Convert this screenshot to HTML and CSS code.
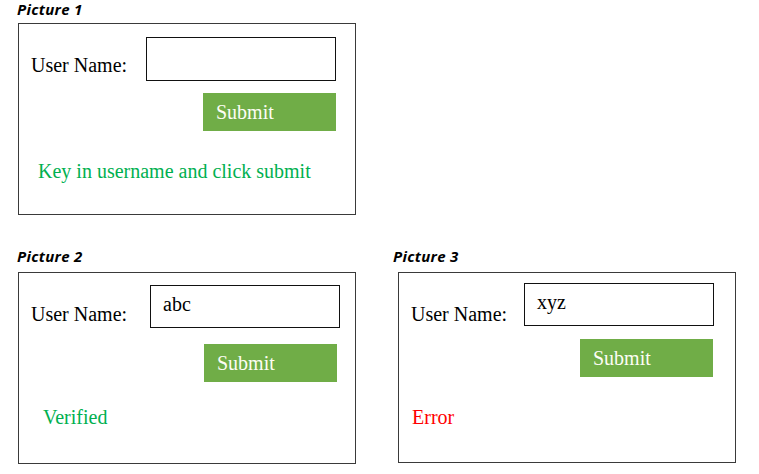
FILE: index.html
```html
<!DOCTYPE html>
<html>
<head>
<meta charset="utf-8">
<link rel="stylesheet" href="styles.css">
</head>
<body>
<div class="page">
  <section class="figure figure--first">
    <div class="fig-title">Picture 1</div>
    <div class="card card--one">
      <div class="field-row">
        <span class="label">User Name:</span>
        <div class="input"></div>
      </div>
      <div class="button">Submit</div>
      <div class="message message--info">Key in username and click submit</div>
    </div>
  </section>
  <div class="figure-row">
    <section class="figure">
      <div class="fig-title">Picture 2</div>
      <div class="card card--two">
        <div class="field-row">
          <span class="label">User Name:</span>
          <div class="input">abc</div>
        </div>
        <div class="button">Submit</div>
        <div class="message message--ok">Verified</div>
      </div>
    </section>
    <section class="figure figure--right">
      <div class="fig-title">Picture 3</div>
      <div class="card card--three">
        <div class="field-row">
          <span class="label">User Name:</span>
          <div class="input">xyz</div>
        </div>
        <div class="button">Submit</div>
        <div class="message message--error">Error</div>
      </div>
    </section>
  </div>
</div>
</body>
</html>
```
FILE: styles.css
```css
html, body {
  margin: 0;
  padding: 0;
  background: #ffffff;
}

.page {
  padding-left: 17px;
  width: 759px;
  box-sizing: border-box;
}

.figure-row {
  display: flex;
  gap: 37px;
  margin-top: 32px;
}

.fig-title {
  font-family: "Open Sans", "Liberation Sans", Arial, sans-serif;
  font-weight: 700;
  font-style: italic;
  font-size: 15px;
  line-height: 19px;
  height: 19px;
  color: #000;
  letter-spacing: 0.3px;
}

.card {
  box-sizing: border-box;
  width: 338px;
  height: 192px;
  margin-top: 6px;
  margin-left: 1px;
  border: 1px solid #3a3a3a;
  padding: var(--pt) 0 0 12px;
  display: flex;
  flex-direction: column;
  font-family: "Liberation Serif", "Times New Roman", serif;
  font-size: 20px;
  line-height: 23px;
  color: #000;
}

.figure--first .card {
  margin-top: 4px;
}

.figure--right .card {
  margin-left: 5px;
}

.card--one {
  --pt: 13px;
  --label-top: 17px;
  --input-right: 19px;
  --input-h: 44px;
  --btn-gap: 12px;
  --btn-right: 19px;
  --msg-gap: 29px;
  --msg-x: 7px;
}

.card--two {
  --pt: 12px;
  --label-top: 18px;
  --input-right: 15px;
  --input-h: 43px;
  --btn-gap: 16px;
  --btn-right: 18px;
  --msg-gap: 24px;
  --msg-x: 12px;
}

.card--three {
  height: 191px;
  --pt: 10px;
  --label-top: 20px;
  --input-right: 21px;
  --input-h: 43px;
  --btn-gap: 13px;
  --btn-right: 22px;
  --msg-gap: 29px;
  --msg-x: 1px;
}

.field-row {
  display: flex;
  align-items: flex-start;
}

.label {
  margin-top: var(--label-top);
  white-space: nowrap;
}

.input {
  box-sizing: border-box;
  margin-left: auto;
  margin-right: var(--input-right);
  width: 190px;
  height: var(--input-h);
  border: 1px solid #111;
  padding: 7px 0 0 12px;
  font-family: "Liberation Serif", "Times New Roman", serif;
}

.button {
  box-sizing: border-box;
  align-self: flex-end;
  margin-top: var(--btn-gap);
  margin-right: var(--btn-right);
  width: 133px;
  height: 38px;
  padding-left: 13px;
  display: flex;
  align-items: center;
  background: #70ad47;
  color: #fdfdf5;
}

.message {
  margin-top: var(--msg-gap);
  margin-left: var(--msg-x);
  white-space: nowrap;
}

.message--info,
.message--ok {
  color: #00b050;
}

.message--error {
  color: #ff0000;
}
```
